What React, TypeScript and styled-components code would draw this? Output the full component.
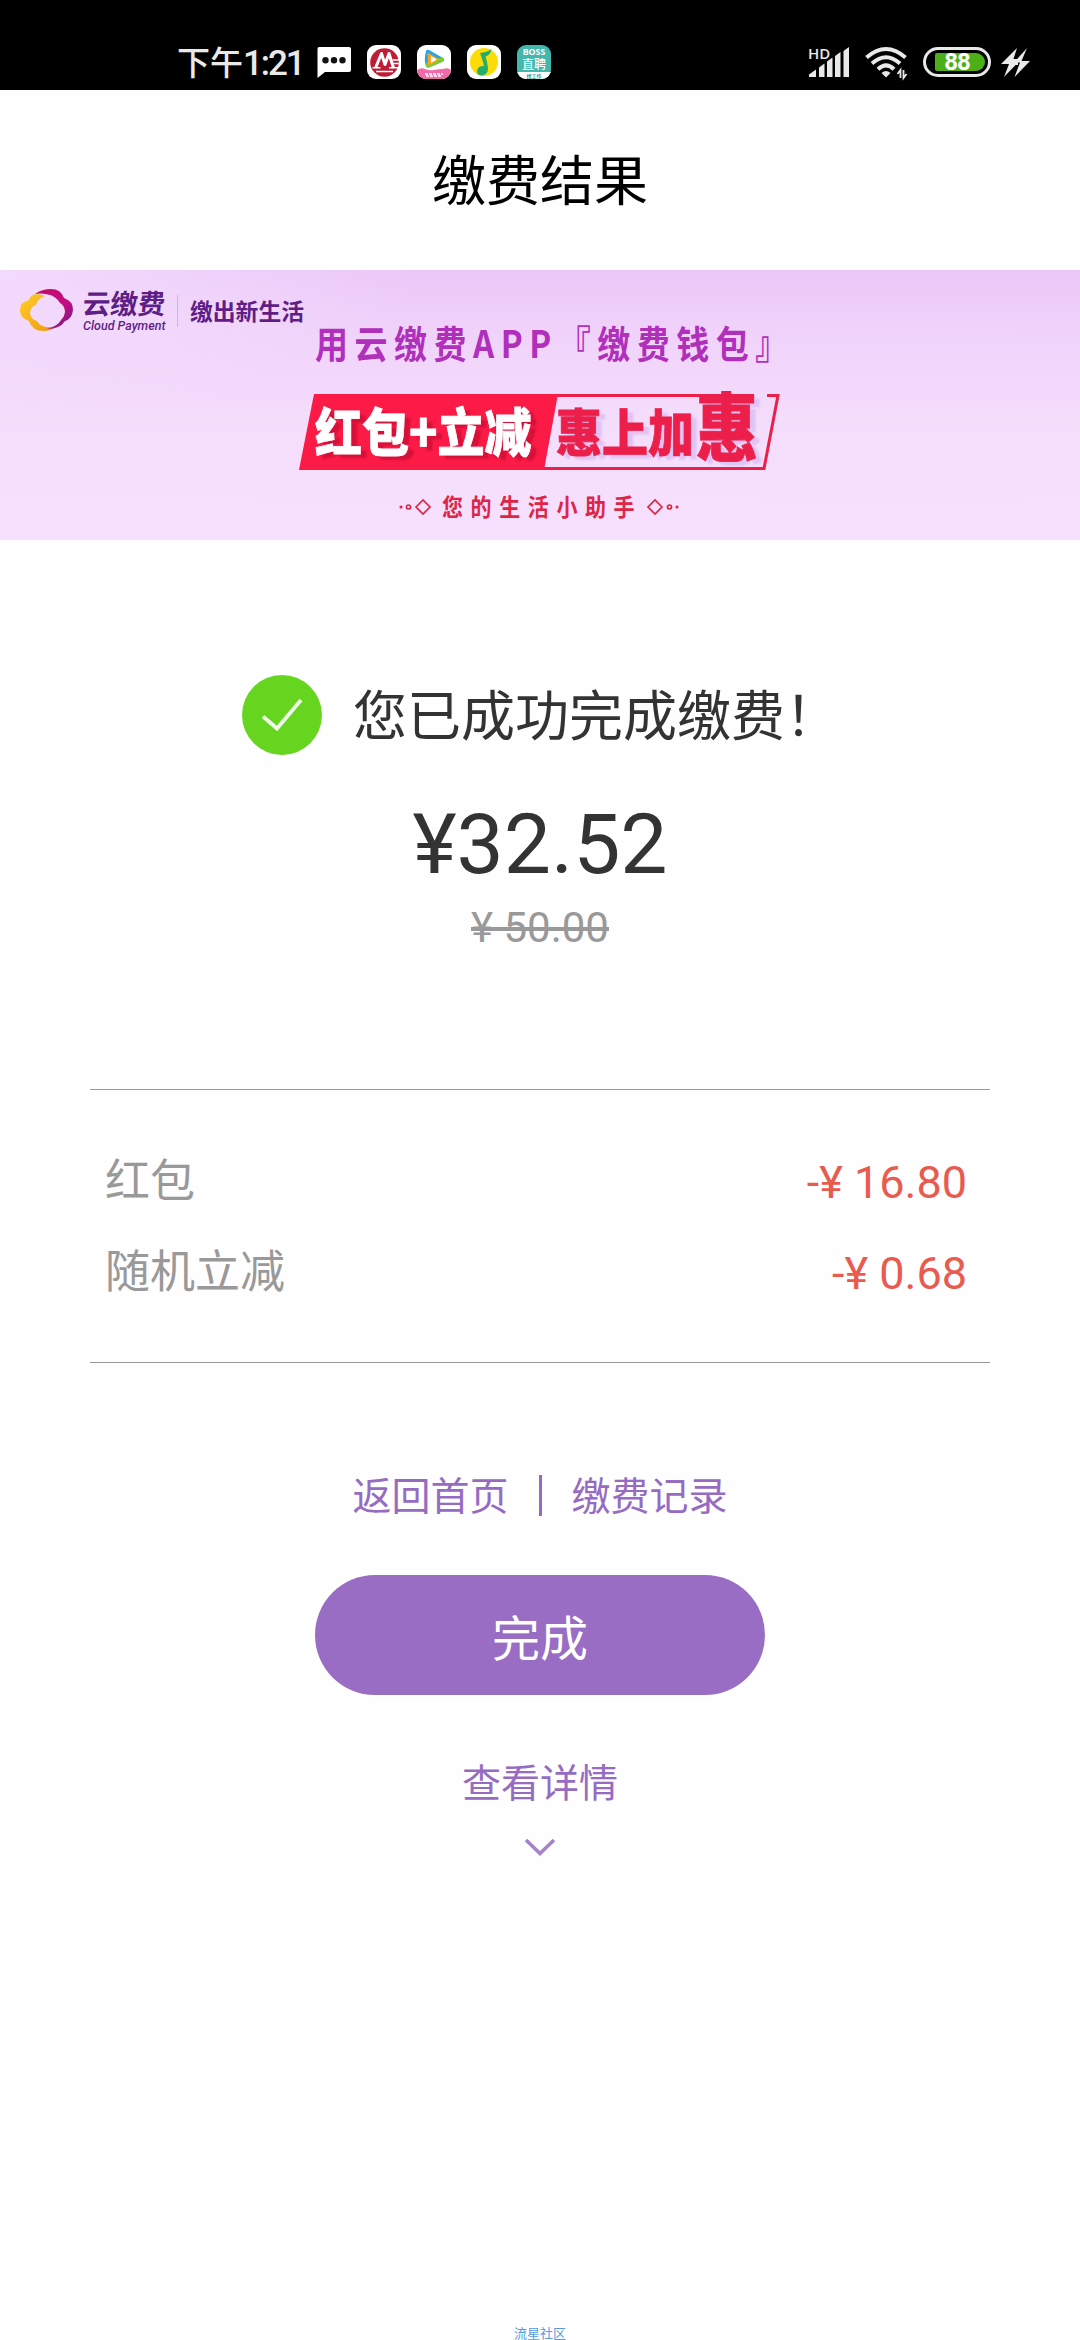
import React from "react";
import styled, { createGlobalStyle } from "styled-components";

const GlobalStyle = createGlobalStyle`
  * { box-sizing: border-box; }
  body {
    margin: 0;
    background: #fff;
    font-family: Roboto, "Noto Sans CJK SC", sans-serif;
  }
  svg { display: block; flex: none; overflow: visible; }
`;

const Screen = styled.div`
  width: 1080px;
  height: 2340px;
  display: flex;
  flex-direction: column;
  align-items: center;
  overflow: hidden;
  background: #fefefe;
`;

const StatusBar = styled.header`
  width: 100%;
  height: 90px;
  padding: 0 50px 0 177px;
  display: flex;
  align-items: center;
  justify-content: space-between;
  flex: none;
  background: #000;
  color: #e9e9e9;
`;

const StatusGroup = styled.div<{ $gap: number; $top?: number }>`
  display: flex;
  align-items: center;
  gap: ${(p) => p.$gap}px;
  padding-top: ${(p) => p.$top ?? 34}px;
`;

const Clock = styled.div`
  width: 124px;
  white-space: nowrap;
  font: 500 33px/40px "Noto Sans CJK SC", sans-serif;
`;

const ClockDigits = styled.span`
  font: 500 35px/40px Roboto, sans-serif;
  letter-spacing: -2.1px;
`;

const AppTile = styled.div<{ $bg: string }>`
  width: 34px;
  height: 34px;
  border-radius: 9px;
  overflow: hidden;
  background: ${(p) => p.$bg};
`;

const BossTile = styled(AppTile)`
  display: flex;
  flex-direction: column;
  align-items: center;
  color: #fff;
`;

const BossLatin = styled.span`
  margin-top: 2px;
  font: 700 8.8px/10px "Open Sans", sans-serif;
`;

const BossHan = styled.span`
  font: 500 12px/14px "Noto Sans CJK SC", sans-serif;
`;

const BossFoot = styled.span`
  width: 34px;
  margin-top: 1px;
  text-align: center;
  background: #fff;
  color: #2b9d92;
  font: 700 5px/7px "Noto Sans CJK SC", sans-serif;
`;

const Battery = styled.div`
  width: 68px;
  height: 30px;
  margin: 0 10px 0 15px;
  padding: 3px 3px 3px 9px;
  border: 3px solid #e9e9e9;
  border-radius: 15px;
`;

const BatteryFill = styled.div`
  height: 18px;
  border-radius: 2px 9px 9px 2px;
  background: #4caf17;
  color: #fff;
  text-align: center;
  padding-right: 6px;
  letter-spacing: -1px;
  font: 700 24px/19px Roboto, sans-serif;
`;

const TitleBar = styled.h1`
  width: 100%;
  height: 180px;
  margin: 0;
  flex: none;
  text-align: center;
  color: #000;
  font: 400 54px/175px "Noto Sans CJK SC", sans-serif;
`;

const Banner = styled.section`
  position: relative;
  width: 100%;
  height: 270px;
  padding-top: 50px;
  display: flex;
  flex-direction: column;
  flex: none;
  background:
    radial-gradient(ellipse 420px 150px at 0 0, rgba(248, 232, 255, 0.6), rgba(246, 226, 253, 0)),
    linear-gradient(#ebc7f8 0%, #f0d3fa 25%, #f5defc 60%, #f6e0fd 100%);
`;

const Brand = styled.div`
  position: absolute;
  left: 18px;
  top: 18px;
  display: flex;
  align-items: center;
  color: #5f1d86;
`;

const BrandNames = styled.div`
  display: flex;
  flex-direction: column;
  width: 86px;
  margin-left: 9px;
  white-space: nowrap;
`;

const BrandHan = styled.span`
  font: 700 27.5px/29px "Noto Sans CJK SC", sans-serif;
  transform: translateY(-2px) skewX(-5deg);
`;

const BrandLatin = styled.span`
  font: italic 500 12.5px/14px Roboto, sans-serif;
`;

const BrandRule = styled.div`
  width: 1px;
  height: 32px;
  margin: 0 12px 0 8px;
  background: #d3b5e3;
`;

const Slogan = styled.span`
  font: 700 22.8px/30px "Noto Sans CJK SC", sans-serif;
`;

const Headline = styled.div`
  height: 44px;
  padding-left: 315px;
  white-space: nowrap;
  color: #b02fbb;
  font: 700 33px/44px "Noto Sans CJK SC", sans-serif;
  letter-spacing: 6.5px;
  transform: scaleY(1.15);
`;

const Ribbon = styled.div`
  position: relative;
  width: 484px;
  height: 84px;
  margin: 26px 0 0 298px;
  padding-left: 17px;
  display: flex;
  align-items: center;
`;

const RibbonShape = styled.svg`
  position: absolute;
  left: 0;
  top: 0;
`;

const RibbonText = styled.span<{ $color: string; $shadow: string; $width: number; $size?: number }>`
  position: relative;
  width: ${(p) => p.$width}px;
  margin-top: -5px;
  white-space: nowrap;
  color: ${(p) => p.$color};
  font: 900 ${(p) => p.$size ?? 46}px/60px "Noto Sans CJK SC", sans-serif;
  -webkit-text-stroke: 0.7px ${(p) => p.$color};
  text-shadow: 6px 3px 2px ${(p) => p.$shadow};
  transform: scaleY(1.12);
`;

const RibbonBig = styled(RibbonText)`
  margin-top: -18px;
  line-height: 72px;
  transform: scaleY(1.2);
`;

const Tagline = styled.div`
  display: flex;
  align-items: center;
  height: 30px;
  margin: 18px 0 0 399px;
  gap: 9px;
  color: #dd2647;
`;

const TaglineText = styled.span`
  width: 194px;
  white-space: nowrap;
  font: 700 21px/26px "Noto Sans CJK SC", sans-serif;
  letter-spacing: 7.6px;
  transform: translateY(-1px) scaleY(1.12);
`;

const Result = styled.section`
  width: 100%;
  padding: 135px 0 0 242px;
  display: flex;
  align-items: center;
  gap: 31px;
`;

const ResultText = styled.span`
  height: 80px;
  color: #333;
  white-space: nowrap;
  font: 400 54px/76px "Noto Sans CJK SC", sans-serif;
`;

const Amount = styled.div`
  margin-top: 40px;
  color: #333;
  font: 400 84px/100px Roboto, sans-serif;
`;

const OriginalAmount = styled.div`
  margin-top: 5px;
  color: #999;
  text-decoration: line-through;
  font: 400 42px/56px Roboto, sans-serif;
`;

const Discounts = styled.section`
  width: 900px;
  height: 274px;
  margin-top: 133px;
  padding: 44px 23px 0 15px;
  flex: none;
  border: solid #999;
  border-width: 1px 0;
`;

const DiscountRow = styled.div`
  height: 91px;
  display: flex;
  justify-content: space-between;
`;

const DiscountName = styled.span`
  color: #999;
  font: 400 45px/88px "Noto Sans CJK SC", sans-serif;
`;

const DiscountValue = styled.span`
  color: #e95b4f;
  font: 400 45px/97px Roboto, sans-serif;
`;

const Links = styled.nav`
  display: flex;
  align-items: center;
  height: 60px;
  margin-top: 102px;
`;

const TextLink = styled.a`
  height: 60px;
  color: #966cc2;
  white-space: nowrap;
  font: 400 39px/56px "Noto Sans CJK SC", sans-serif;
`;

const LinkRule = styled.div`
  width: 3px;
  height: 41px;
  margin: 0 30px;
  background: #966cc2;
`;

const DoneButton = styled.button`
  width: 450px;
  height: 120px;
  margin: 50px 0 57px;
  padding: 0;
  flex: none;
  border: 0;
  border-radius: 60px;
  background: #986dc3;
  color: #fff;
  font: 400 48px/120px "Noto Sans CJK SC", sans-serif;
`;

const ChevronSlot = styled.div`
  padding-top: 26px;
`;

const Footer = styled.footer`
  margin-top: auto;
  height: 14px;
  color: #559be0;
  font: 400 13px/14px "Noto Sans CJK SC", sans-serif;
`;

const ChatIcon = () => (
  <svg width="34" height="31" viewBox="0 0 34 31">
    <path d="M2 0h30q2 0 2 2v21q0 2-2 2H8L.5 31V2Q.5 0 2 0z" fill="#fff" />
    {[8.5, 17, 25.5].map((x) => (
      <circle key={x} cx={x} cy="13.3" r="3.2" fill="#111" />
    ))}
  </svg>
);

const BankIcon = () => (
  <AppTile $bg="#fff">
    <svg width="34" height="34" viewBox="0 0 34 34">
      <circle cx="17.5" cy="17.5" r="14.3" fill="#bd1e36" />
      <path d="M8.500 23l6-14.500 3.500 11 4-11 4.500 14.500" fill="none" stroke="#fff" strokeWidth="3" strokeLinejoin="round" />
      <path d="M5.500 22.800h8M9 26.500h17M22 22.800h12M26.500 18.500h7M25.500 15h7" stroke="#fff" strokeWidth="1.600" />
    </svg>
  </AppTile>
);

const VideoIcon = () => (
  <AppTile $bg="#fff">
    <svg width="34" height="34" viewBox="0 0 34 34">
      <path d="M9 6q1-2 4-.5l13 7.5q2.5 1.8 0 3.500L12 22.500q-3 .5-3.500-2.500Q7 14 9 6z" fill="#27a4e8" />
      <path d="M9 19l2-4 15.500-2.500q1 2.500-.5 4L12 22.500q-3 .5-3-2z" fill="#7bcc2a" />
      <path d="M10.500 7.500l12 7-11 6.500z" fill="#ffa21e" />
      <path d="M14 11l6 3.500-6 3.500z" fill="#fff" />
      <path d="M0 25q4-3 8-1 4 2 9 1t9-1q5-2 8 1v9H0z" fill="#f469a8" />
      <path d="M8 29h18M9 31h16" stroke="#fff" strokeWidth="1.300" strokeDasharray="3 1" />
    </svg>
  </AppTile>
);

const MusicIcon = () => (
  <AppTile $bg="#fff">
    <svg width="34" height="34" viewBox="0 0 34 34">
      <circle cx="17" cy="17" r="14" fill="#fbdc08" />
      <path
        d="M13 8q7-.5 11.500-4-1 6-6 7.500 2 6 2.500 11.500 0 7-6 7.500-5 0-5-4.500 1-5.500 7-5-1-5-4-13z"
        fill="#24ae6c"
      />
    </svg>
  </AppTile>
);

const SignalStack = styled.div`
  width: 42px;
  height: 31px;
  display: grid;
  > * { grid-area: 1 / 1; }
`;

const HdLabel = styled.span`
  margin-top: -3px;
  font: 600 15px/18px "Open Sans", sans-serif;
  color: #e9e9e9;
`;

const SignalIcon = () => (
  <SignalStack>
    <HdLabel>HD</HdLabel>
    <svg width="42" height="31" viewBox="0 0 42 31" fill="#e9e9e9">
      <path d="M1 30v-2.500l7-5V30zM11 30V20.500l5.500-4V30zM19 30V14.500l5.500-4V30zM27 30V9l5.500-4v25zM35.500 30V4L41 0v30z" />
    </svg>
  </SignalStack>
);

const WifiIcon = () => (
  <svg width="43" height="33" viewBox="0 0 43 33" fill="none" stroke="#e9e9e9" strokeWidth="4">
    <path d="M1.500 11.500Q21 -5.500 40.500 11.500M7 17.500Q21 5 35 17.500M13 23.300Q21 15.500 29 23.300" />
    <path d="M16.500 27q4.500-4 9 0l-4.500 4.500z" fill="#e9e9e9" stroke="none" />
    <path d="M35.500 32v-8l-3 4M38.500 24v8l3-4" strokeWidth="1.800" />
  </svg>
);

const BoltIcon = () => (
  <svg width="29" height="31" viewBox="0 0 29 31" fill="#e9e9e9">
    <path d="M16 1L0 17h8L3 30l14.500-15h-6z" />
    <path d="M26 1L13 15.500h6L13.500 30 29 14h-8.500z" />
    <path d="M11 12h6v6h-6z" />
  </svg>
);

const CloudLogo = () => (
  <svg width="56" height="46" viewBox="0 0 56 46">
    <defs>
      <linearGradient id="gold" x1="0" y1="0" x2="1" y2="1">
        <stop offset="0" stopColor="#ffce26" />
        <stop offset="1" stopColor="#ee9a12" />
      </linearGradient>
      <linearGradient id="plum" x1="0" y1="0" x2="1" y2="1">
        <stop offset="0" stopColor="#c40a68" />
        <stop offset="0.600" stopColor="#c20e82" />
        <stop offset="1" stopColor="#652082" />
      </linearGradient>
    </defs>
    <path
      d="M20 6Q12 6 11 12 2 14 2 22q0 8 9 11 3 10 15 10 6 0 10-3l-4-1q-9 1-13-6-7-2-7-9 1-6 6-7 1-6 9-9z"
      fill="url(#gold)"
    />
    <path
      d="M17 6Q24 1 33 1q10 0 13 9 9 3 9 12-1 9-8 11-5 8-18 8 11-3 14-9 4-4 4-9-1-6-5-8Q38 8 30 6.500q-7-1.500-13-.5z"
      fill="url(#plum)"
    />
  </svg>
);

const Ornament = ({ flip }: { flip?: boolean }) => (
  <svg width="34" height="16" viewBox="0 0 34 16" fill="none" stroke="#dd2647" strokeWidth="1.700">
    <g transform={flip ? "translate(34 0) scale(-1 1)" : undefined}>
      <circle cx="2" cy="8" r="0.700" />
      <circle cx="9.500" cy="8" r="2" />
      <path d="M17 8l7-7 7 7-7 7z" />
    </g>
  </svg>
);

const SuccessIcon = () => (
  <svg width="80" height="80" viewBox="0 0 80 80">
    <circle cx="40" cy="40" r="40" fill="#66d520" />
    <path d="M21 41.500L35 53.500 59 25" fill="none" stroke="#effbe8" strokeWidth="3.800" />
  </svg>
);

const Chevron = () => (
  <svg width="32" height="19" viewBox="0 0 32 19">
    <path d="M2 2l14 13.500L30 2" fill="none" stroke="#a384cb" strokeWidth="3.600" />
  </svg>
);

const discounts = [
  { name: "红包", value: "-¥ 16.80" },
  { name: "随机立减", value: "-¥ 0.68" },
];

export default function App() {
  return (
    <>
      <GlobalStyle />
      <Screen>
        <StatusBar>
          <StatusGroup $gap={16}>
            <Clock>
              下午<ClockDigits>1:21</ClockDigits>
            </Clock>
            <StatusGroup $gap={16} $top={0}>
              <ChatIcon />
              <BankIcon />
              <VideoIcon />
              <MusicIcon />
              <BossTile $bg="#42b8ad">
                <BossLatin>BOSS</BossLatin>
                <BossHan>直聘</BossHan>
                <BossFoot>找工作</BossFoot>
              </BossTile>
            </StatusGroup>
          </StatusGroup>
          <StatusGroup $gap={0}>
            <StatusGroup $gap={15} $top={0}>
              <SignalIcon />
              <WifiIcon />
            </StatusGroup>
            <Battery>
              <BatteryFill>88</BatteryFill>
            </Battery>
            <BoltIcon />
          </StatusGroup>
        </StatusBar>

        <TitleBar>缴费结果</TitleBar>

        <Banner>
          <Brand>
            <CloudLogo />
            <BrandNames>
              <BrandHan>云缴费</BrandHan>
              <BrandLatin>Cloud Payment</BrandLatin>
            </BrandNames>
            <BrandRule />
            <Slogan>缴出新生活</Slogan>
          </Brand>
          <Headline>用云缴费APP『缴费钱包』</Headline>
          <Ribbon>
            <RibbonShape width="484" height="84" viewBox="0 0 484 84">
              <path d="M16 4H260L246 80H1z" fill="#fc1b46" />
              <path d="M259 5.500H456M469 5.500H480L466 78.500H246" fill="none" stroke="#ec1f4b" strokeWidth="3" />
            </RibbonShape>
            <RibbonText $color="#fff" $shadow="rgba(190,10,50,.6)" $width={241} $size={47}>
              红包+立减
            </RibbonText>
            <RibbonText $color="#ec1f4b" $shadow="rgba(216,184,240,.7)" $width={140}>
              惠上加
            </RibbonText>
            <RibbonBig $color="#ec1f4b" $shadow="rgba(216,184,240,.7)" $width={62} $size={62}>
              惠
            </RibbonBig>
          </Ribbon>
          <Tagline>
            <Ornament />
            <TaglineText>您的生活小助手</TaglineText>
            <Ornament flip />
          </Tagline>
        </Banner>

        <Result>
          <SuccessIcon />
          <ResultText>您已成功完成缴费！</ResultText>
        </Result>
        <Amount>¥32.52</Amount>
        <OriginalAmount>¥ 50.00</OriginalAmount>

        <Discounts>
          {discounts.map((d) => (
            <DiscountRow key={d.name}>
              <DiscountName>{d.name}</DiscountName>
              <DiscountValue>{d.value}</DiscountValue>
            </DiscountRow>
          ))}
        </Discounts>

        <Links>
          <TextLink>返回首页</TextLink>
          <LinkRule />
          <TextLink>缴费记录</TextLink>
        </Links>
        <DoneButton>完成</DoneButton>
        <TextLink>查看详情</TextLink>
        <ChevronSlot>
          <Chevron />
        </ChevronSlot>

        <Footer>流星社区</Footer>
      </Screen>
    </>
  );
}
